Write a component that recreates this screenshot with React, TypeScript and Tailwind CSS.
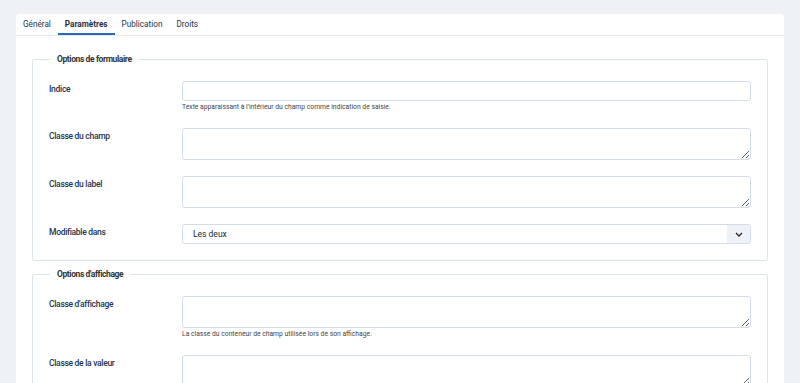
import React, { FC, ReactNode } from "react";

const tabs = ["Général", "Paramètres", "Publication", "Droits"];

interface RowProps {
  label: string;
  help?: string;
  children: ReactNode;
}

const Row: FC<RowProps> = ({ label, help, children }) => {
  return (
    <div className="flex">
      <label className="w-[133px] shrink-0 pt-[2px] text-[8.5px] leading-[12px] font-medium tracking-[-0.3px] text-[#22344f]">
        {label}
      </label>
      <div className="flex-1">
        {children}
        {help && (
          <p className="mt-[2px] text-[6.75px] leading-[9px] text-[#444]">{help}</p>
        )}
      </div>
    </div>
  );
};

const TextInput = () => (
  <input
    type="text"
    className="block w-full h-[20px] rounded-[3px] border border-[#d3dcea] bg-white"
  />
);

const TextArea = () => (
  <textarea className="block w-full h-[32px] rounded-[3px] border border-[#d3dcea] bg-white resize-y" />
);

const Select = () => (
  <div className="flex h-[20px] rounded-[3px] border border-[#d3dcea] bg-white overflow-hidden">
    <span className="flex-1 pl-[10px] text-[8.5px] leading-[18px] text-[#22262a]">Les deux</span>
    <span className="w-[23px] flex items-center justify-center bg-[#eef2f8]">
      <svg width="8" height="5" viewBox="0 0 8 5" fill="none">
        <path d="M1 1l3 3 3-3" stroke="#22262a" strokeWidth="1.3" />
      </svg>
    </span>
  </div>
);

const Section: FC<{ title: string; children: ReactNode }> = ({ title, children }) => (
  <fieldset className="border border-[#dbe3ee] rounded-[2px] px-[16px] pb-[16px]">
    <legend className="ml-[1px] px-[7px] text-[8.5px] leading-[14px] font-bold tracking-[-0.4px] text-[#333]">
      {title}
    </legend>
    <div className="pt-[15px] flex flex-col gap-[16px]">{children}</div>
  </fieldset>
);

export default function App() {
  return (
    <div
      className="min-h-screen bg-[#eef1f6] pt-[14px] px-[16px]"
      style={{ fontFamily: "Roboto, 'Liberation Sans', sans-serif" }}
    >
      <div className="bg-white rounded-t-[3px] overflow-hidden h-[369px]">
        <nav className="flex h-[22px] border-b border-[#e4e9f0]">
          {tabs.map((t, i) => (
            <div
              key={t}
              className={`px-[7px] pt-[4px] text-[8.2px] leading-[12px] ${
                i === 1
                  ? "font-bold text-[#1f2f47] border-b-2 border-[#2a69b8]"
                  : "text-[#22344f]"
              }`}
            >
              {t}
            </div>
          ))}
        </nav>
        <div className="px-[16px] pt-[16px] flex flex-col gap-[6px]">
          <Section title="Options de formulaire">
            <Row
              label="Indice"
              help="Texte apparaissant à l'intérieur du champ comme indication de saisie."
            >
              <TextInput />
            </Row>
            <Row label="Classe du champ">
              <TextArea />
            </Row>
            <Row label="Classe du label">
              <TextArea />
            </Row>
            <Row label="Modifiable dans">
              <Select />
            </Row>
          </Section>
          <Section title="Options d'affichage">
            <Row
              label="Classe d'affichage"
              help="La classe du conteneur de champ utilisée lors de son affichage."
            >
              <TextArea />
            </Row>
            <Row label="Classe de la valeur">
              <TextArea />
            </Row>
          </Section>
        </div>
      </div>
    </div>
  );
}
